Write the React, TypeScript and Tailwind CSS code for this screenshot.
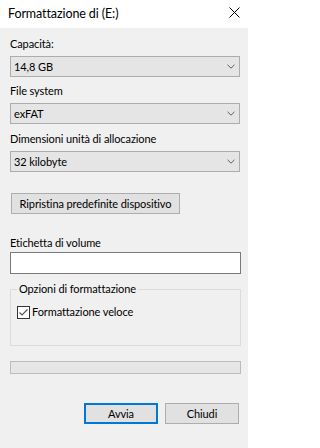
function Chevron() {
  return (
    <svg width="8" height="5" viewBox="0 0 8 5" className="shrink-0">
      <path d="M0.5 0.8 L4 4.2 L7.5 0.8" fill="none" stroke="#606060" strokeWidth="1" />
    </svg>
  );
}

function Select({ value }: { value: string }) {
  return (
    <div className="flex h-[21px] items-center justify-between border border-[#adadad] bg-[#e5e5e5] pl-[3px] pr-[4px]">
      <span>{value}</span>
      <Chevron />
    </div>
  );
}

export default function App() {
  return (
    <div className="flex h-[448px] w-[248px] flex-col bg-[#f0f0f0] text-[11px] leading-[16px] tracking-[-0.1px] text-black [font-family:Lato,sans-serif]">
      {/* title bar */}
      <div className="flex h-[28px] shrink-0 items-center justify-between bg-white pl-[8px] pr-[8px]">
        <span className="text-[12.5px]">Formattazione di (E:)</span>
        <svg width="11" height="11" viewBox="0 0 11 11" className="-mt-[3px]">
          <path d="M0.5 0.5 L10.5 10.5 M10.5 0.5 L0.5 10.5" stroke="#000" strokeWidth="1" />
        </svg>
      </div>

      <div className="flex flex-col pl-[10px]">
        <label className="mt-[8px]">Capacità:</label>
        <div className="mt-[4px] w-[230px]">
          <Select value="14,8 GB" />
        </div>

        <label className="mt-[6px]">File system</label>
        <div className="mt-[4px] w-[230px]">
          <Select value="exFAT" />
        </div>

        <label className="mt-[7px]">Dimensioni unità di allocazione</label>
        <div className="mt-[4px] w-[230px]">
          <Select value="32 kilobyte" />
        </div>

        <button className="ml-[1px] mt-[21px] flex h-[21px] w-[169px] items-center justify-center border border-[#adadad] bg-[#e1e1e1]">
          Ripristina predefinite dispositivo
        </button>

        <label className="mt-[21px]">Etichetta di volume</label>
        <input className="mt-[1px] h-[22px] w-[231px] border border-[#7a7a7a] bg-white outline-none" />

        <fieldset className="mt-[7px] h-[65px] w-[231px] border border-[#dcdcdc] pl-[6px]">
          <legend className="px-[2px]">Opzioni di formattazione</legend>
          <div className="mt-[7px] flex items-center gap-[2px]">
            <span className="flex h-[13px] w-[13px] items-center justify-center border border-[#333333] bg-white">
              <svg width="11" height="11" viewBox="0 0 11 11">
                <path d="M1.5 5.5 L4 8 L9.5 2.5" fill="none" stroke="#555555" strokeWidth="1.2" />
              </svg>
            </span>
            <span>Formattazione veloce</span>
          </div>
        </fieldset>

        <div className="mt-[15px] h-[13px] w-[231px] border border-[#bcbcbc] bg-[#e6e6e6]" />

        <div className="mt-[29px] flex w-[229px] justify-end gap-[7px]">
          <button className="flex h-[21px] w-[74px] items-center justify-center border-2 border-[#0078d7] bg-[#e1e1e1]">
            Avvia
          </button>
          <button className="flex h-[21px] w-[74px] items-center justify-center border border-[#adadad] bg-[#e1e1e1]">
            Chiudi
          </button>
        </div>
      </div>
    </div>
  );
}
